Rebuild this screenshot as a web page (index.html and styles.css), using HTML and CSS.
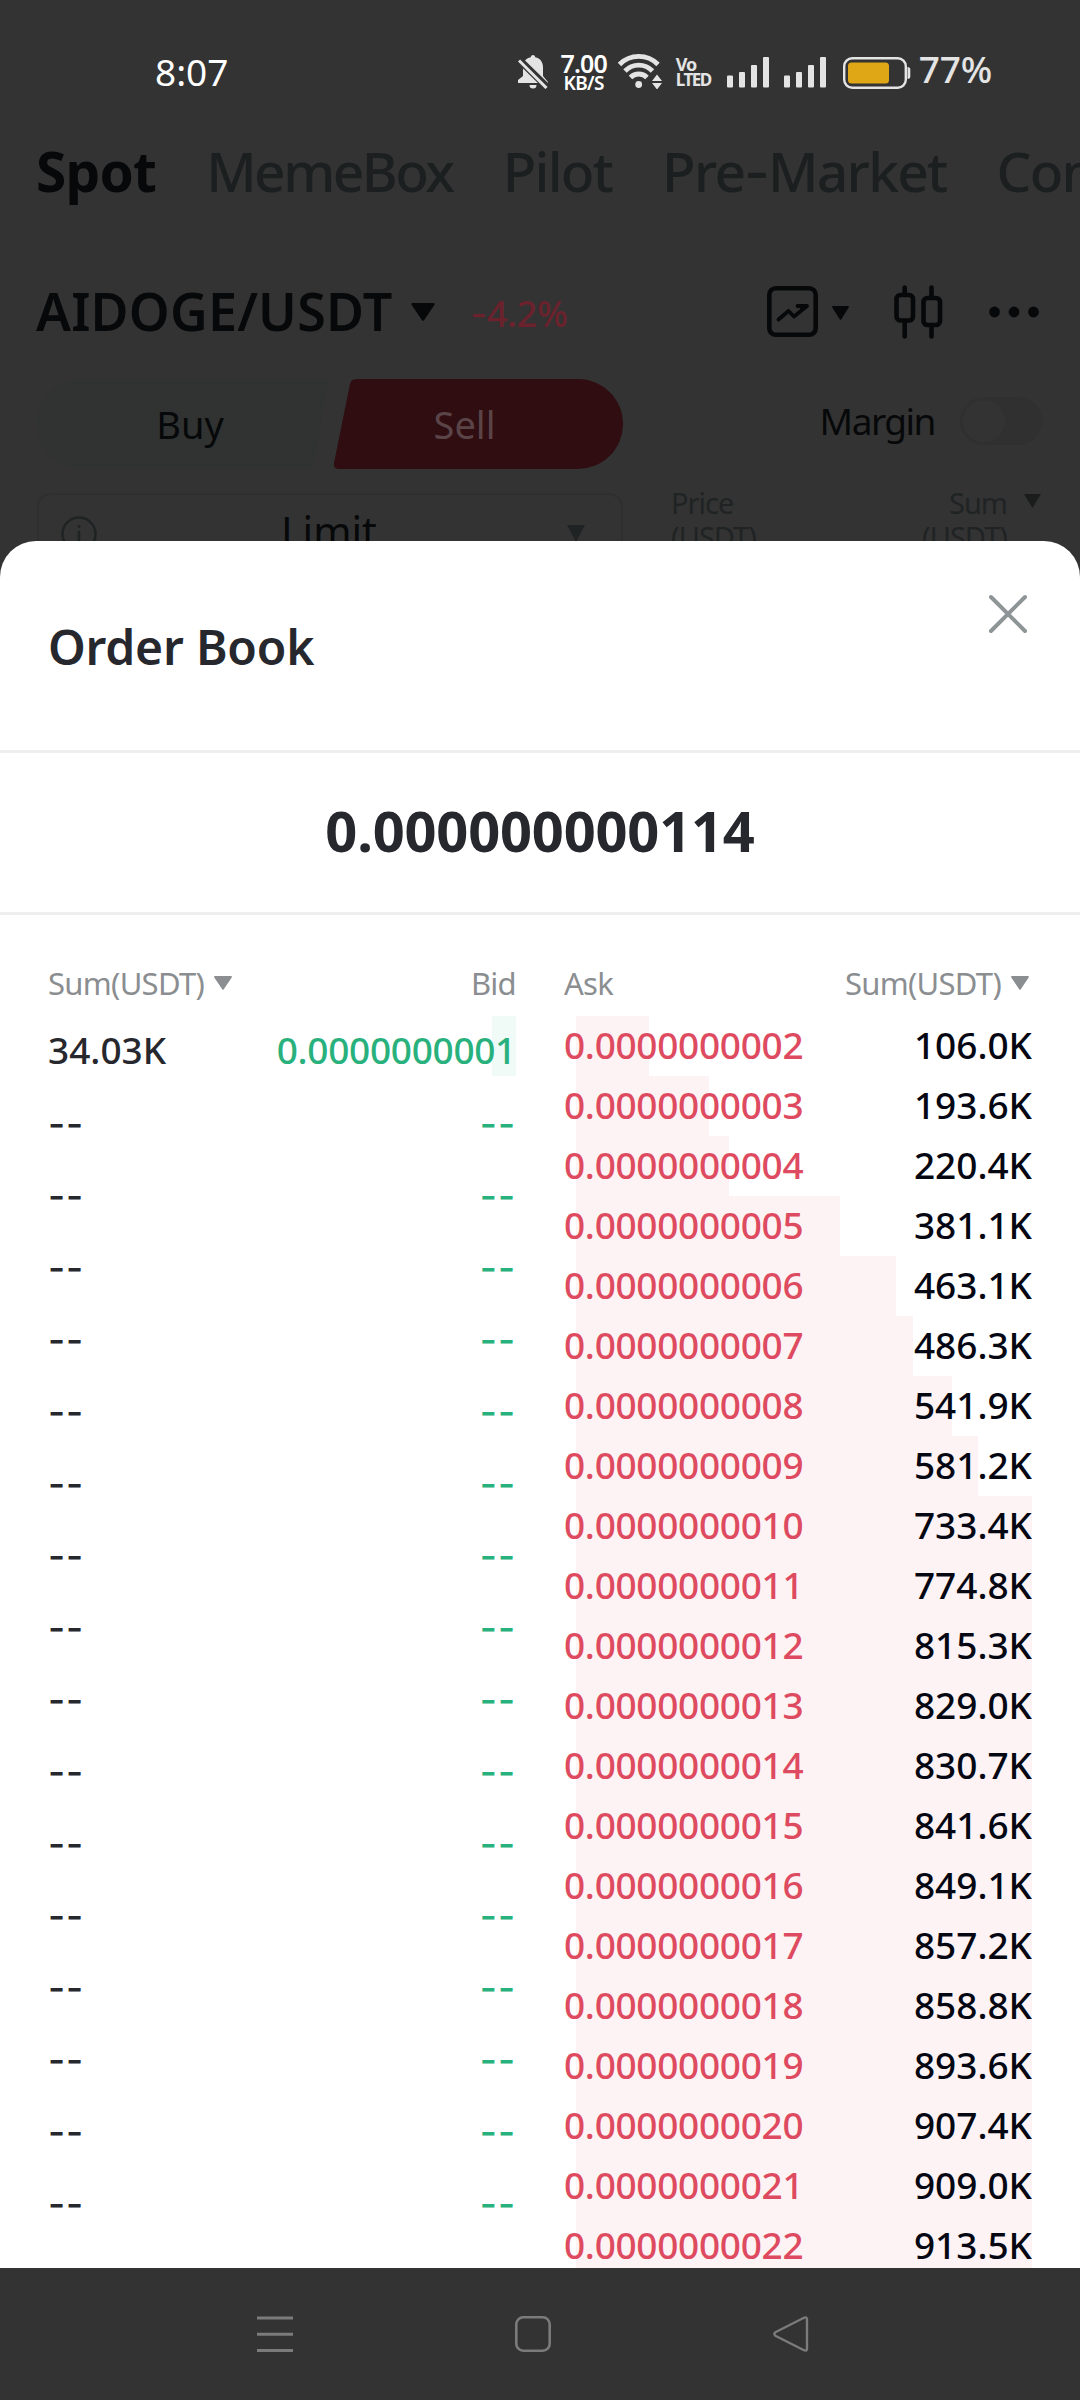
FILE: index.html
```html
<!DOCTYPE html>
<html lang="en">
<head>
<meta charset="utf-8">
<title>Order Book</title>
<link rel="stylesheet" href="styles.css">
</head>
<body>
<div class="screen">
  <div class="market">
    <header class="status">
      <span class="clock">8:07</span>
      <div class="status-icons">
        <svg class="bell" width="30" height="34" viewBox="0 0 30 34"><path fill="#e4e4e4" d="M15 0c1.400 0 2.200 1 2.200 2.300C22.500 3.400 25 7.500 25 12v9l5 6v1H0v-3l5-4v-9C5 7.500 7.500 3.400 12.800 2.300 12.800 1 13.600 0 15 0zM11.500 30h7a3.500 3.500 0 0 1-7 0z"/><path stroke="#333" stroke-width="7" d="M0 3.500 30 33"/><path stroke="#e4e4e4" stroke-width="3" d="M1 5.500 28.500 33"/></svg>
        <div class="speed"><span class="speed-n">7.00</span><span class="speed-u">KB/S</span></div>
        <svg class="wifi" width="46" height="36" viewBox="0 0 46 36"><g fill="none" stroke="#e4e4e4" stroke-width="4.800"><path d="M1.500 11.500a27 27 0 0 1 38.500 0"/><path d="M7 18a19 19 0 0 1 27.500 0"/><path d="M12.500 24.500a11.500 11.500 0 0 1 16.500 0"/></g><circle cx="20.700" cy="31.500" r="3.400" fill="#e4e4e4"/><path fill="#333" d="M32 22h14v14H32z"/><path fill="#e4e4e4" d="m39 21.500 5 6.500H34zM34 30h10l-5 6.500z"/></svg>
        <div class="volte"><span class="vo">Vo</span><span class="lte">LTED</span></div>
        <svg class="sig" width="43" height="31" viewBox="0 0 43 31"><g fill="#e4e4e4"><rect y="18.500" width="6" height="12" rx="1"/><rect x="12" y="15" width="6" height="15.500" rx="1"/><rect x="24" y="8" width="6" height="22.500" rx="1"/><rect x="36" width="6" height="30.500" rx="1"/></g></svg>
        <svg class="sig" width="43" height="31" viewBox="0 0 43 31"><g fill="#e4e4e4"><rect y="18.500" width="6" height="12" rx="1"/><rect x="12" y="15" width="6" height="15.500" rx="1"/><rect x="24" y="8" width="6" height="22.500" rx="1"/><rect x="36" width="6" height="30.500" rx="1"/></g></svg>
        <svg class="battery" width="68" height="32" viewBox="0 0 68 32"><rect x="1.200" y="1.200" width="61.600" height="29.600" rx="8" fill="none" stroke="#e4e4e4" stroke-width="2.400"/><rect x="5" y="5.500" width="41" height="21" rx="3.500" fill="#dfa616"/><path fill="#e4e4e4" d="M64.500 10c2 0 2.800 1 2.800 2.500v7c0 1.500-.8 2.500-2.800 2.500z"/></svg>
        <span class="percent">77%</span>
      </div>
    </header>
    <nav class="tabs">
      <span class="tab tab-on">Spot</span><span class="tab tab-meme">MemeBox</span><span class="tab">Pilot</span><span class="tab">Pre<span class="dash">-</span>Market</span><span class="tab">Convert</span>
    </nav>
    <div class="pair">
      <span class="pair-name">AIDOGE/USDT</span>
      <svg class="pair-arrow" width="24" height="18" viewBox="0 0 24 18"><path fill="#070809" d="M1.500 0h21c1 0 1.500 1 1 1.800L13 17.200c-.5.800-1.500.8-2 0L.5 1.800C0 1 .5 0 1.500 0z"/></svg>
      <span class="change"><span class="dash">-</span>4.2%</span>
      <div class="tools">
        <svg width="51" height="51" viewBox="0 0 51 51" fill="none" stroke="#070809"><rect x="2.300" y="2.300" width="46.400" height="46.400" rx="6.500" stroke-width="4.600"/><path stroke-width="3.800" stroke-linecap="round" stroke-linejoin="round" d="m11.500 33.500 10-8.500 5.500 5.500L40 20H30.500"/><path fill="#070809" d="M31 19h10l-5 6z"/></svg>
        <svg class="tool-arrow" width="17" height="14" viewBox="0 0 17 14"><path fill="#070809" d="M1 0h15c.9 0 1.200.8.700 1.500L9.300 13.300c-.4.700-1.200.7-1.600 0L.3 1.500C-.2.800.1 0 1 0z"/></svg>
        <svg class="candles" width="49" height="54" viewBox="0 0 49 54" fill="none" stroke="#070809" stroke-width="4.600" stroke-linecap="round"><rect x="2.500" y="10" width="16.500" height="25.500" rx="4"/><path d="M10.700 2.500V9m0 28v14.500M37.500 2.500V12m0 28v11.500"/><rect x="29.500" y="13" width="16.500" height="27" rx="4"/></svg>
        <svg class="dots" width="50" height="12" viewBox="0 0 50 12" fill="#070809"><circle cx="5.500" cy="6" r="5.400"/><circle cx="25" cy="6" r="5.400"/><circle cx="44.500" cy="6" r="5.400"/></svg>
      </div>
    </div>
    <div class="trade">
      <div class="form">
        <div class="sides">
          <div class="side buy"><svg class="side-bg" width="292" height="90" viewBox="0 0 292 90"><path fill="#303332" d="M45 0h240q6 0 5 6l-13 78q-1 6-7 6H45a45 45 0 0 1 0-90z"/></svg><span>Buy</span></div>
          <div class="side sell"><svg class="side-bg" width="289" height="90" viewBox="0 0 289 90"><path fill="#2f0d11" d="M23 0h221a45 45 0 0 1 0 90H5q-6 0-5-6L16 5q1-5 7-5z"/></svg><span>Sell</span></div>
        </div>
        <div class="type">
          <svg width="36" height="36" viewBox="0 0 36 36" fill="none" stroke="#202324" stroke-width="2.600"><circle cx="18" cy="18" r="16.500"/><path d="M18 15v12M18 9v3"/></svg>
          <span>Limit</span>
          <svg width="18" height="18" viewBox="0 0 18 18"><path fill="#202324" d="M0 0h18L9 17z"/></svg>
        </div>
      </div>
      <div class="side-book">
        <div class="margin"><span class="margin-label">Margin</span><span class="toggle"><i></i></span></div>
        <div class="side-head">
          <span>Price<br>(USDT)</span>
          <span class="side-sum">Sum<br>(USDT)</span>
          <svg width="17" height="14" viewBox="0 0 17 14"><path fill="#1b1c1c" d="M0 0h17L8.500 14z"/></svg>
        </div>
      </div>
    </div>
  </div>

  <main class="sheet">
    <div class="sheet-head">
      <h1>Order Book</h1>
      <svg class="close" width="40" height="40" viewBox="0 0 40 40"><path stroke="#8f9496" stroke-width="4" stroke-linecap="round" d="m3 3 34 34M37 3 3 37"/></svg>
    </div>
    <div class="last">0.000000000114</div>
    <div class="book">
      <section class="bids">
        <div class="cols"><span class="col-sum">Sum(USDT) <svg width="18" height="14" viewBox="0 0 18 14"><path fill="#8b8e91" d="M1 0h16c.9 0 1.200.8.700 1.500L9.800 13.300c-.4.700-1.200.7-1.600 0L.3 1.500C-.2.800.1 0 1 0z"/></svg></span><span>Bid</span></div>
        <div class="bid"><i class="bar" style="width:24px"></i><b>34.03K</b><span>0.0000000001</span></div>
        <div class="bid none"><b>--</b><span>--</span></div>
        <div class="bid none"><b>--</b><span>--</span></div>
        <div class="bid none"><b>--</b><span>--</span></div>
        <div class="bid none"><b>--</b><span>--</span></div>
        <div class="bid none"><b>--</b><span>--</span></div>
        <div class="bid none"><b>--</b><span>--</span></div>
        <div class="bid none"><b>--</b><span>--</span></div>
        <div class="bid none"><b>--</b><span>--</span></div>
        <div class="bid none"><b>--</b><span>--</span></div>
        <div class="bid none"><b>--</b><span>--</span></div>
        <div class="bid none"><b>--</b><span>--</span></div>
        <div class="bid none"><b>--</b><span>--</span></div>
        <div class="bid none"><b>--</b><span>--</span></div>
        <div class="bid none"><b>--</b><span>--</span></div>
        <div class="bid none"><b>--</b><span>--</span></div>
        <div class="bid none"><b>--</b><span>--</span></div>
      </section>
      <section class="asks">
        <div class="cols"><span>Ask</span><span class="col-sum">Sum(USDT) <svg width="18" height="14" viewBox="0 0 18 14"><path fill="#8b8e91" d="M1 0h16c.9 0 1.200.8.700 1.500L9.800 13.300c-.4.700-1.200.7-1.600 0L.3 1.500C-.2.800.1 0 1 0z"/></svg></span></div>
        <div class="ask"><i class="bar" style="width:73px"></i><span>0.0000000002</span><b>106.0K</b></div>
        <div class="ask"><i class="bar" style="width:133px"></i><span>0.0000000003</span><b>193.6K</b></div>
        <div class="ask"><i class="bar" style="width:153px"></i><span>0.0000000004</span><b>220.4K</b></div>
        <div class="ask"><i class="bar" style="width:264px"></i><span>0.0000000005</span><b>381.1K</b></div>
        <div class="ask"><i class="bar" style="width:320px"></i><span>0.0000000006</span><b>463.1K</b></div>
        <div class="ask"><i class="bar" style="width:337px"></i><span>0.0000000007</span><b>486.3K</b></div>
        <div class="ask"><i class="bar" style="width:376px"></i><span>0.0000000008</span><b>541.9K</b></div>
        <div class="ask"><i class="bar" style="width:402px"></i><span>0.0000000009</span><b>581.2K</b></div>
        <div class="ask"><i class="bar" style="width:456px"></i><span>0.0000000010</span><b>733.4K</b></div>
        <div class="ask"><i class="bar" style="width:456px"></i><span>0.0000000011</span><b>774.8K</b></div>
        <div class="ask"><i class="bar" style="width:456px"></i><span>0.0000000012</span><b>815.3K</b></div>
        <div class="ask"><i class="bar" style="width:456px"></i><span>0.0000000013</span><b>829.0K</b></div>
        <div class="ask"><i class="bar" style="width:456px"></i><span>0.0000000014</span><b>830.7K</b></div>
        <div class="ask"><i class="bar" style="width:456px"></i><span>0.0000000015</span><b>841.6K</b></div>
        <div class="ask"><i class="bar" style="width:456px"></i><span>0.0000000016</span><b>849.1K</b></div>
        <div class="ask"><i class="bar" style="width:456px"></i><span>0.0000000017</span><b>857.2K</b></div>
        <div class="ask"><i class="bar" style="width:456px"></i><span>0.0000000018</span><b>858.8K</b></div>
        <div class="ask"><i class="bar" style="width:456px"></i><span>0.0000000019</span><b>893.6K</b></div>
        <div class="ask"><i class="bar" style="width:456px"></i><span>0.0000000020</span><b>907.4K</b></div>
        <div class="ask"><i class="bar" style="width:456px"></i><span>0.0000000021</span><b>909.0K</b></div>
        <div class="ask"><i class="bar" style="width:456px"></i><span>0.0000000022</span><b>913.5K</b></div>
      </section>
    </div>
  </main>

  <footer class="navbar">
    <svg width="36" height="36" viewBox="0 0 36 36"><path stroke="#7b7b7b" stroke-width="3" d="M0 2h36M0 18.300h36M0 34.500h36"/></svg>
    <svg width="36" height="36" viewBox="0 0 36 36"><rect x="1.300" y="1.300" width="33.400" height="33.400" rx="7" fill="none" stroke="#7b7b7b" stroke-width="2.600"/></svg>
    <svg width="36" height="36" viewBox="0 0 36 36"><path fill="none" stroke="#7b7b7b" stroke-width="2.400" stroke-linejoin="round" d="M2.300 16.300 31 1.800q3-1.300 3 1.700v29q0 3-3 1.700L2.300 19.700q-2-1.700 0-3.400z"/></svg>
  </footer>
</div>
</body>
</html>
```

FILE: styles.css
```css
* { box-sizing: border-box; }
body { margin: 0; background: #333; font-family: "Noto Sans", sans-serif; }
svg { display: block; flex: none; }
.screen { width: 1080px; height: 2400px; display: flex; flex-direction: column; overflow: hidden; background: #333; }
.market { height: 541px; overflow: hidden; flex: none; }

/* status bar */
.status { height: 110px; display: flex; align-items: flex-start; justify-content: space-between; padding: 0 88px 0 155px; color: #e4e4e4; }
.clock { color: #fff; font-size: 37px; line-height: 52px; margin-top: 46px; letter-spacing: 0; }
.status-icons { display: flex; align-items: flex-start; }
.bell { margin-top: 55px; }
.speed { display: flex; flex-direction: column; align-items: center; width: 50px; margin: 53px 0 0 11px; color: #fff; font-weight: 600; }
.speed-n { font-size: 25px; line-height: 21px; letter-spacing: -.8px; }
.speed-u { font-size: 19px; line-height: 19px; letter-spacing: -.6px; }
.wifi { margin: 53px 0 0 9px; }
.volte { display: flex; flex-direction: column; width: 37px; margin: 57px 0 0 12px; font-weight: 700; line-height: 15px; font-size: 18px; }
.vo { letter-spacing: -1px; }
.lte { font-size: 17px; letter-spacing: -1.500px; }
.sig { margin: 57px 0 0 14px; }
.battery { margin: 57px 0 0 16px; }
.percent { font-size: 37px; font-weight: 500; line-height: 50px; margin: 44px 0 0 8px; letter-spacing: -.2px; }

/* market header behind the sheet */
.tabs { height: 130px; display: flex; gap: 50px; padding-left: 36px; line-height: 121px; font-size: 55px; font-weight: 500; color: #1c1f1f; white-space: nowrap; letter-spacing: -1.700px; }
.tab-on { color: #070809; font-weight: 700; letter-spacing: -.8px; }
.tab-meme { letter-spacing: -2.500px; }
.dash { font-family: Inter, sans-serif; }
.pair { height: 139px; display: flex; align-items: center; padding: 4px 41px 0 36px; }
.pair-name { font-size: 52px; font-weight: 600; color: #070809; letter-spacing: .2px; line-height: 60px; margin-top: -2px; }
.pair-arrow { margin-left: 19px; }
.change { margin: 4px 0 0 35px; font-size: 36px; font-weight: 500; color: #6c222d; letter-spacing: -.2px; }
.tools { margin-left: auto; display: flex; align-items: center; }
.tool-arrow { margin: 3px 0 0 14px; }
.candles { margin-left: 45px; }
.dots { margin-left: 46px; }
.trade { display: flex; justify-content: space-between; padding: 0 38px 0 37px; }
.form { width: 586px; }
.sides { display: flex; gap: 6px; color: #070809; font-size: 38px; }
.side { height: 90px; display: grid; place-items: center; line-height: 90px; }
.side > * { grid-area: 1 / 1; }
.buy { width: 291px; }
.buy span { margin-left: 14px; }
.sell { width: 289px; color: #5a4447; }
.sell span { margin-right: 28px; }
.type { height: 90px; margin-top: 24px; border: 2px solid #2e2f2f; border-radius: 14px; display: flex; justify-content: space-between; align-items: center; padding: 0 36px 8px 22px; font-size: 41px; color: #070809; }
.type span { line-height: 50px; margin: -6px 0 0 -6px; }
.side-book { width: 371px; }
.margin { height: 90px; display: flex; justify-content: flex-end; align-items: center; gap: 25px; font-size: 37px; line-height: 40px; color: #070809; padding-bottom: 6px; }
.margin-label { letter-spacing: -1.500px; }
.toggle { width: 82px; height: 48px; border-radius: 24px; background: #303030; }
.toggle i { display: block; width: 42px; height: 42px; border-radius: 50%; background: #333; margin: 3px; }
.side-head { display: flex; padding-top: 17px; font-size: 29px; line-height: 34px; color: #202324; letter-spacing: -1px; }
.side-sum { margin-left: auto; text-align: right; }
.side-head svg { margin: 8px 1px 0 17px; }

/* order book sheet */
.sheet { height: 1727px; flex: none; overflow: hidden; background: #fff; border-radius: 36px 36px 0 0; }
.sheet-head { height: 212px; border-bottom: 3px solid #eee; display: flex; justify-content: space-between; align-items: flex-start; padding: 53px 52px 0 48px; }
h1 { margin: 20px 0 0; font-size: 48px; font-weight: 600; line-height: 66px; letter-spacing: -.2px; color: #26282e; }
.last { height: 162px; border-bottom: 3px solid #eee; text-align: center; font-size: 56px; font-weight: 700; line-height: 154px; letter-spacing: -.2px; color: #26282e; }
.book { display: flex; justify-content: space-between; padding: 40px 48px 0; }
.bids { width: 468px; }
.asks { width: 468px; }
.cols { height: 61px; display: flex; justify-content: space-between; font-size: 31px; line-height: 57px; letter-spacing: -.7px; color: #8b8e91; }
.col-sum { display: flex; align-items: center; height: 56px; gap: 10px; }
.asks .cols { padding-right: 3px; }
.bid, .ask { position: relative; display: flex; justify-content: space-between; font-size: 37px; line-height: 58px; font-weight: 500; }
.bid b, .ask b, .bid span, .ask span { position: relative; font-weight: 500; }
.bid > span, .ask > span { letter-spacing: -.3px; }
.bid { height: 72px; line-height: 68px; color: #28b17c; }
.bid b { color: #26282e; }
.none { font-family: Inter, sans-serif; line-height: 72px; }
.none > b, .bid.none > span { letter-spacing: 1px; }
.ask { height: 60px; line-height: 57px; color: #de4b60; }
.ask b { color: #050713; }
.bar { position: absolute; top: 0; left: 12px; height: 60px; background: #fdf3f4; }
.bid .bar { left: auto; right: 0; background: #f0faf6; }

.navbar { height: 132px; display: flex; align-items: flex-start; gap: 222px; padding: 48px 0 0 257px; }
```
